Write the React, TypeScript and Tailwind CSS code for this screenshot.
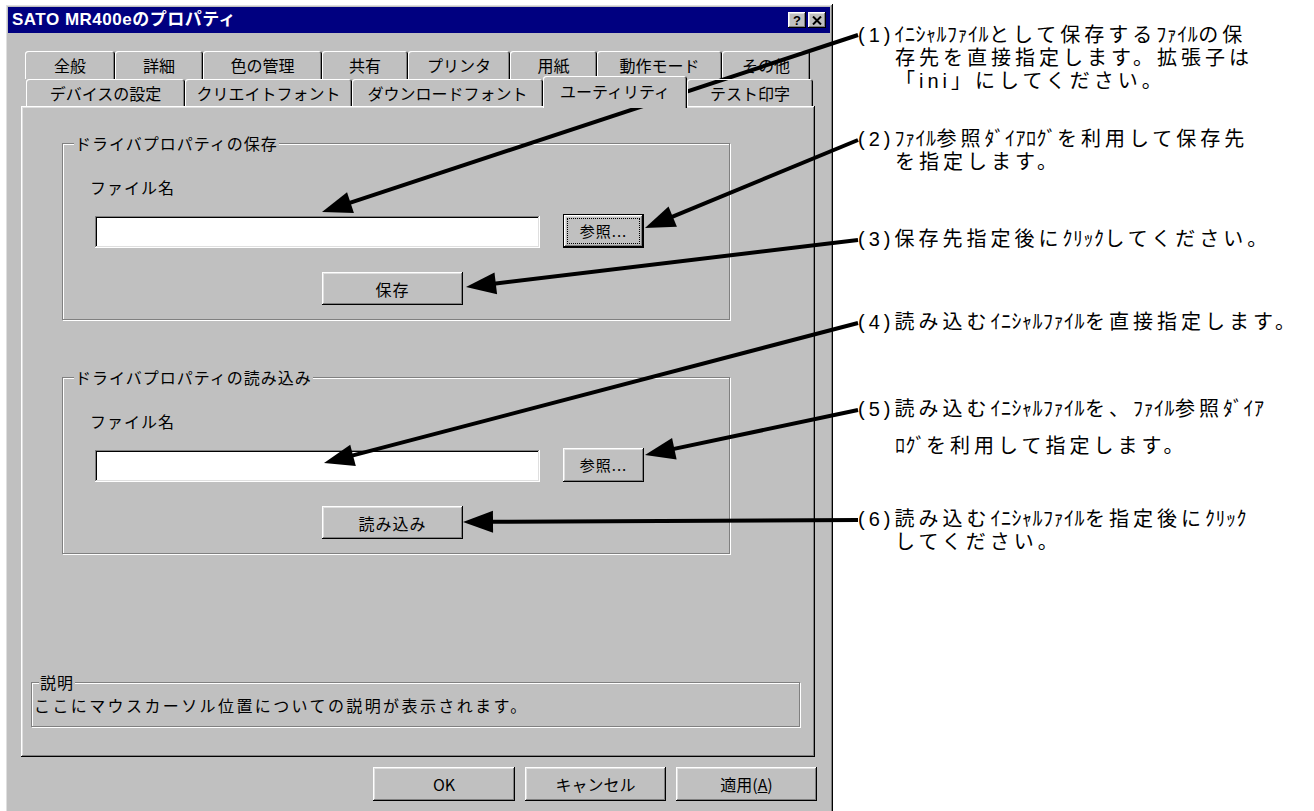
import React from "react";

// Win95 bevels
const RAISED = "shadow-[inset_-1px_-1px_0_#000,inset_1px_1px_0_#fff,inset_-2px_-2px_0_#808080,inset_2px_2px_0_#dfdfdf]";
const SUNKEN = "shadow-[inset_-1px_-1px_0_#fff,inset_1px_1px_0_#808080,inset_-2px_-2px_0_#dfdfdf,inset_2px_2px_0_#000]";
const ETCHED = "border border-[#808080] shadow-[1px_1px_0_#fff,inset_1px_1px_0_#fff]";
const TAB = "shrink-0 rounded-t-[3px] flex items-center justify-center shadow-[inset_1px_1px_0_#fff,inset_-1px_0_0_#000,inset_-2px_0_0_#808080]";

const ROW1 = [
  { label: "全般", w: 90 },
  { label: "詳細", w: 88 },
  { label: "色の管理", w: 119 },
  { label: "共有", w: 86 },
  { label: "プリンタ", w: 102 },
  { label: "用紙", w: 87 },
  { label: "動作モード", w: 125 },
  { label: "その他", w: 88 },
];

const ROW2 = [
  { label: "デバイスの設定", w: 159 },
  { label: "クリエイトフォント", w: 167 },
  { label: "ダウンロードフォント", w: 191 },
  { label: "ユーティリティ", w: 144, active: true },
  { label: "テスト印字", w: 126 },
];

const NOTES = [
  { lines: ["(1)ｲﾆｼｬﾙﾌｧｲﾙとして保存するﾌｧｲﾙの保", "存先を直接指定します。拡張子は", "「ini」にしてください。"], cls: "mt-[24px] leading-[23px]" },
  { lines: ["(2)ﾌｧｲﾙ参照ﾀﾞｲｱﾛｸﾞを利用して保存先", "を指定します。"], cls: "mt-[35px] leading-[23px]" },
  { lines: ["(3)保存先指定後にｸﾘｯｸしてください。"], cls: "mt-[54px] leading-[23px]" },
  { lines: ["(4)読み込むｲﾆｼｬﾙﾌｧｲﾙを直接指定します。"], cls: "mt-[60px] leading-[23px]" },
  { lines: ["(5)読み込むｲﾆｼｬﾙﾌｧｲﾙを、ﾌｧｲﾙ参照ﾀﾞｲｱ", "ﾛｸﾞを利用して指定します。"], cls: "mt-[57px] leading-[37px]" },
  { lines: ["(6)読み込むｲﾆｼｬﾙﾌｧｲﾙを指定後にｸﾘｯｸ", "してください。"], cls: "mt-[43px] leading-[23px]" },
];

const ARROWS = [
  [858, 35, 322, 212],
  [858, 140, 645, 228],
  [858, 240, 466, 287],
  [858, 323, 324, 463],
  [858, 410, 645, 455],
  [858, 520, 463, 522],
];

// half-width katakana runs are set tight, the rest keeps the wide tracking
function Jp({ text }: { text: string }) {
  const parts = text.split(/([\uFF61-\uFF9F]+)/);
  return (
    <>
      {parts.map((p, i) =>
        /[\uFF61-\uFF9F]/.test(p) ? (
          <span key={i} className="tracking-[0.5px]">{p}</span>
        ) : (
          <React.Fragment key={i}>{p}</React.Fragment>
        )
      )}
    </>
  );
}

function Arrow({ x1, y1, x2, y2 }: { x1: number; y1: number; x2: number; y2: number }) {
  const len = Math.hypot(x2 - x1, y2 - y1);
  const ux = (x2 - x1) / len;
  const uy = (y2 - y1) / len;
  const L = 30;
  const W = 11;
  const bx = x2 - ux * L;
  const by = y2 - uy * L;
  const pts = `${x2},${y2} ${bx - uy * W},${by + ux * W} ${bx + uy * W},${by - ux * W}`;
  return (
    <g>
      <line x1={x1} y1={y1} x2={bx + ux * 4} y2={by + uy * 4} stroke="#000" strokeWidth={4} />
      <polygon points={pts} fill="#000" />
    </g>
  );
}

function Button({ children, w, h = 33, focused }: { children: React.ReactNode; w: number; h?: number; focused?: boolean }) {
  if (focused) {
    return (
      <div className="border border-black bg-[#c0c0c0] flex" style={{ width: w, height: h }}>
        <div className={`flex-1 flex p-[3px] ${RAISED}`}>
          <div className="flex-1 border border-dotted border-black flex items-center justify-center">{children}</div>
        </div>
      </div>
    );
  }
  return (
    <div className={`bg-[#c0c0c0] flex items-center justify-center ${RAISED}`} style={{ width: w, height: h }}>
      {children}
    </div>
  );
}

function FileGroup({ title, action, focused }: { title: string; action: string; focused?: boolean }) {
  return (
    <fieldset className={`${ETCHED} pb-[14px]`}>
      <legend className="ml-[11px] px-[1px] bg-[#c0c0c0] leading-[22px]">{title}</legend>
      <div className="ml-[27px] mt-[22px] leading-[22px]">ファイル名</div>
      <div className="mt-[16px] ml-[32px] flex items-end gap-[23px]">
        <div className={`w-[445px] h-[32px] bg-white ${SUNKEN}`} />
        <Button w={81} h={34} focused={focused}>
          <span className="text-[15px]">参照...</span>
        </Button>
      </div>
      <div className="mt-[24px] ml-[259px]">
        <Button w={141}>{action}</Button>
      </div>
    </fieldset>
  );
}

export default function App() {
  return (
    <div className="relative w-[1314px] h-[811px] bg-white overflow-hidden flex font-['Noto_Sans_CJK_JP',sans-serif] text-black">
      {/* dialog */}
      <div className={`ml-[5px] mt-[4px] w-[828px] h-[830px] shrink-0 bg-[#c0c0c0] p-[3px] flex flex-col text-[16px] ${RAISED}`}>
        <div className="h-[26px] bg-[#000080] flex items-center pl-[4px] pr-[4px]">
          <span className="flex-1 text-white font-bold text-[17px] tracking-[0.5px] font-['Liberation_Sans','Noto_Sans_CJK_JP',sans-serif]">
            SATO MR400eのプロパティ
          </span>
          <div className={`w-[18px] h-[16px] bg-[#c0c0c0] flex items-center justify-center ${RAISED}`}>
            <span className="text-[13px] font-bold leading-none font-['Liberation_Sans',sans-serif]">?</span>
          </div>
          <div className={`ml-[2px] w-[18px] h-[16px] bg-[#c0c0c0] flex items-center justify-center ${RAISED}`}>
            <svg width="10" height="9" viewBox="0 0 10 9">
              <path d="M1 0.5 L9 8.5 M9 0.5 L1 8.5" stroke="#000" strokeWidth="2" />
            </svg>
          </div>
        </div>

        <div className="mt-[18px] ml-[13px] mr-[15px] flex flex-col">
          {/* tabs */}
          <div className="flex h-[28px] pl-[4px]">
            {ROW1.map((t) => (
              <div key={t.label} className={`h-[28px] ${TAB}`} style={{ width: t.w }}>
                {t.label}
              </div>
            ))}
          </div>
          <div className="flex h-[27px] pl-[5px] items-end relative z-10">
            {ROW2.map((t) =>
              t.active ? (
                <div key={t.label} className={`h-[32px] -mb-[2px] bg-[#c0c0c0] pb-[3px] ${TAB}`} style={{ width: t.w }}>
                  {t.label}
                </div>
              ) : (
                <div key={t.label} className={`h-[27px] ${TAB}`} style={{ width: t.w }}>
                  {t.label}
                </div>
              )
            )}
          </div>

          {/* panel */}
          <div className={`h-[651px] bg-[#c0c0c0] flex flex-col tracking-[1px] ${RAISED}`}>
            <div className="mt-[26px] ml-[41px] mr-[85px]">
              <FileGroup title="ドライバプロパティの保存" action="保存" focused />
            </div>
            <div className="mt-[46px] ml-[41px] mr-[85px]">
              <FileGroup title="ドライバプロパティの読み込み" action="読み込み" />
            </div>
            <fieldset className={`mt-[117px] ml-[10px] mr-[15px] pb-[10px] ${ETCHED}`}>
              <legend className="ml-[7px] px-[1px] bg-[#c0c0c0] leading-[22px]">説明</legend>
              <div className="mt-[1px] ml-[2px] leading-[22px] tracking-[2.4px]">ここにマウスカーソル位置についての説明が表示されます。</div>
            </fieldset>
          </div>
        </div>

        <div className="mt-[10px] pr-[13px] flex justify-end gap-[10px]">
          <Button w={142} h={34}>OK</Button>
          <Button w={141} h={34}>キャンセル</Button>
          <Button w={141} h={34}>
            <span>
              適用(<span className="underline">A</span>)
            </span>
          </Button>
        </div>
      </div>

      {/* notes: Liberation Sans first so the line boxes stay inside the tight leading */}
      <div className="ml-[25px] flex flex-col text-[20px] tracking-[4px] whitespace-nowrap font-['Liberation_Sans','Noto_Sans_CJK_JP',sans-serif]">
        {NOTES.map((n, i) => (
          <div key={i} className={n.cls}>
            {n.lines.map((l, j) => (
              <div key={j} className={j === 0 ? "" : "pl-[37px]"}>
                <Jp text={l} />
              </div>
            ))}
          </div>
        ))}
      </div>

      <svg className="absolute inset-0 pointer-events-none" width="1314" height="811">
        {ARROWS.map(([x1, y1, x2, y2], i) => (
          <Arrow key={i} x1={x1} y1={y1} x2={x2} y2={y2} />
        ))}
      </svg>
    </div>
  );
}
